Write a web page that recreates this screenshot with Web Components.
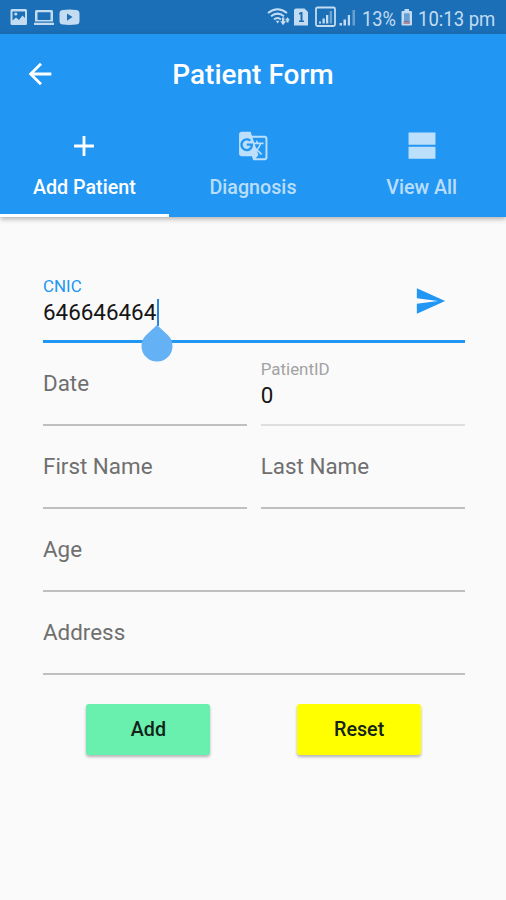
<!DOCTYPE html>
<html lang="en">
<head>
<meta charset="utf-8">
<title>Patient Form</title>
<style>
html,body{margin:0;height:100%}
body{background:#fafafa;font-family:Roboto,"Liberation Sans",sans-serif;overflow:hidden}
</style>
</head>
<body>
<patient-app></patient-app>
<script>
const define = (name, html) => customElements.define(name, class extends HTMLElement {
  connectedCallback() {
    if (this.shadowRoot) return;
    const t = document.createElement('template');
    t.innerHTML = typeof html === 'function' ? html(this) : html;
    this.attachShadow({mode: 'open'}).append(t.content.cloneNode(true));
  }
});

define('status-bar', `
<style>
:host{display:flex;align-items:center;justify-content:space-between;height:34px;background:#1b6fb7;color:#c3dcf1;box-sizing:border-box;padding:0 5px 0 10px}
svg{display:block;fill:currentColor;overflow:visible}
.t{font-size:21px;fill:currentColor}
</style>
<svg width="72" height="34" viewBox="0 0 72 34">
  <path fill-rule="evenodd" d="M2 9H15.500Q17 9 17 10.500V23.500Q17 25 15.500 25H2Q.5 25 .5 23.500V10.500Q.5 9 2 9ZM2.500 11.500V20.500L6 17.500L9 20L12.500 15.500L15 18V11.500Z"/>
  <circle cx="5.800" cy="14" r="1.600"/>
  <path fill-rule="evenodd" d="M26.500 10H41.500Q43 10 43 11.500V21.500H25V11.500Q25 10 26.500 10ZM27.500 12.200V20H40.500V12.200Z"/>
  <rect x="24" y="22.700" width="20" height="2.300"/>
  <path fill-rule="evenodd" d="M53 10Q59.500 9 66 10Q69.500 10 69.500 13.500V21Q69.500 24.500 66 24.500Q59.500 25.300 53 24.500Q49.500 24.500 49.500 21V13.500Q49.500 10 53 10ZM57 13.500V20.700L62.500 17.100Z"/>
</svg>
<svg width="235" height="34" viewBox="266 0 235 34">
  <g fill="none" stroke="currentColor" stroke-width="2">
    <path d="M268 13Q277.500 5.500 287 13"/><path d="M271 16.300Q277.500 11 284 16.300"/><path d="M274 19.500Q277.500 16.500 281 19.500"/>
  </g>
  <path d="M275.800 20.800H279.500L277.600 23.500ZM282 17.500H284.300V21.300H286L283.100 25.200L280.200 21.300H282ZM287.500 17.300L290 20.200H288.600V22.500H286.400V20.200H285Z"/>
  <path fill-rule="evenodd" d="M296 8.500H304.500L308 12V25.500H294V10.500Q294 8.500 296 8.500ZM299 13V14.700L300.500 14V20.500H299V22H304V20.500H302.500V12H301Z"/>
  <path fill="none" stroke="currentColor" stroke-width="1.800" d="M317.500 7.500H333.500Q335 7.500 335 9V24.500Q335 26 333.500 26H317.500Q316 26 316 24.500V9Q316 7.500 317.500 7.500Z"/>
  <path d="M319 21.500H321V23.500H319ZM322.500 18.500H324.800V23.500H322.500ZM326 15H328.300V23.500H326Z"/><path opacity=".5" d="M329.700 11H332V23.500H329.700Z"/>
  <path d="M339.500 23H342V25.500H339.500ZM343.500 19.500H346V25.500H343.500Z"/><path d="M347.800 15H350V25.500H347.800Z"/><path opacity=".45" d="M352.500 10H355V25.500H352.500Z"/>
  <text class="t" transform="translate(362 25.500) scale(.87 1)">13%</text>
  <path fill-rule="evenodd" d="M404.500 9H409V11H411Q412 11 412 12V24.500Q412 25.500 411 25.500H402.500Q401.500 25.500 401.500 24.500V12Q401.500 11 402.500 11H404.500ZM404 13.500V23H409.500V13.500Z"/>
  <path opacity=".45" d="M404 13.500H409.500V21H404Z"/><path fill="#b08a9b" d="M403.500 21.500H410V24H403.500Z"/>
  <text class="t" transform="translate(418 25.500) scale(.882 1)">10:13 pm</text>
</svg>`);

define('app-header', `
<style>
:host{display:flex;flex-direction:column;height:183px;background:#2196f3;color:#fff;box-shadow:0 2px 5px rgba(0,0,0,.3)}
.bar{display:grid;grid-template-columns:80px 1fr 80px;align-items:center;height:79px;padding-top:2px;box-sizing:border-box}
h1{margin:0;text-align:center;font-size:28px;font-weight:500;line-height:34px}
svg{display:block;margin:-1px 0 0 23px;fill:currentColor}
</style>
<div class="bar">
<svg width="34" height="34" viewBox="0 0 24 24"><path d="M20 11H7.830l5.590-5.590L12 4l-8 8 8 8 1.410-1.410L7.830 13H20v-2z"/></svg>
<h1><slot name="title"></slot></h1></div>
<slot></slot>`);

define('tab-strip', `
<style>:host{display:grid;grid-template-columns:repeat(3,1fr);flex:1}</style><slot></slot>`);

define('tab-item', `
<style>
:host{display:flex;flex-direction:column;align-items:center;box-sizing:border-box;padding-top:15.500px;border-bottom:3px solid transparent;color:rgba(255,255,255,.7);font-size:19.700px;font-weight:500;line-height:24px;white-space:nowrap}
:host([active]){color:#fff;border-color:#fff}
::slotted(svg){display:block;width:34px;height:34px;fill:currentColor;margin-bottom:13.500px}
</style>
<slot name="icon"></slot><span><slot></slot></span>`);

define('text-field', el => `
<style>
:host{display:flex;height:83px;box-sizing:border-box;border-bottom:2px solid #bfbfbf;color:#6f6f6f;font-size:22.400px;line-height:26px;position:relative;min-width:0}
:host([filled]){color:#151515;border-bottom:2px solid #dedede}
:host([focused]){color:#151515;border-bottom:3px solid #2196f3}
.c{flex:1;padding-top:27px}
:host([filled]) .c,:host([focused]) .c{padding-top:16px}
.l{font-size:16.900px;line-height:20px;height:20px;color:#a2a2a2;margin-bottom:3px}
:host([focused]) .l{color:#2196f3}
.v{display:flex;align-items:center;height:26px}
.caret{width:2px;height:27px;margin-left:.6px;background:#2b84dd;position:relative}
.caret svg{position:absolute;left:-16px;top:25px;display:block;fill:#64b1f6}
::slotted(svg){width:34px;height:34px;fill:#2196f3;margin:24px 17px 0 0}
</style>
<div class="c">${el.hasAttribute('label') ? `<div class="l">${el.getAttribute('label')}</div>` : ''}
<div class="v"><span><slot></slot></span>${el.hasAttribute('focused') ? `<span class="caret"><svg width="32" height="38" viewBox="0 0 32 38"><path d="M16 1L27 11.200A15.500 15.500 0 1 1 5 11.200Z"/></svg></span>` : ''}</div></div>
<slot name="action"></slot>`);

define('raised-button', `
<style>
:host{display:flex;align-items:center;justify-content:center;width:124px;height:51px;border-radius:3px;background:var(--fill);color:#14221a;font-size:19.700px;font-weight:500;line-height:24px;box-shadow:0 2px 3px rgba(0,0,0,.28)}
</style><slot></slot>`);

define('patient-form', `
<style>
:host{display:grid;grid-template-columns:1fr 1fr;column-gap:14px;padding:43px 41.500px 0 43px}
::slotted([wide]){grid-column:1/-1}
</style><slot></slot>`);

define('button-row', `
<style>:host{display:grid;grid-template-columns:1fr 1fr;justify-items:center;padding-top:29px}</style><slot></slot>`);

define('patient-app', `
<style>:host{display:flex;flex-direction:column;height:100vh}</style>
<status-bar></status-bar>
<app-header><span slot="title">Patient Form</span>
<tab-strip>
<tab-item active><svg slot="icon" viewBox="0 0 24 24"><path d="M19 13h-6v6h-2v-6H5v-2h6V5h2v6h6v2z"/></svg>Add Patient</tab-item>
<tab-item><svg slot="icon" viewBox="0 0 24 24"><path d="M21 4H11l-1-3H3c-1.100 0-2 .9-2 2v15c0 1.100.9 2 2 2h8l1 3h9c1.100 0 2-.9 2-2V6c0-1.100-.9-2-2-2zM7 16c-2.760 0-5-2.240-5-5s2.240-5 5-5c1.350 0 2.480.5 3.350 1.300L9.030 8.570c-.38-.36-1.040-.78-2.030-.78-1.740 0-3.150 1.440-3.150 3.210S5.260 14.210 7 14.210c2.010 0 2.840-1.440 2.920-2.410H7v-1.710h4.680c.07.31.12.61.12 1.020C11.800 13.970 9.890 16 7 16zm6.170-5.420h3.700c-.43 1.250-1.110 2.430-2.050 3.470-.31-.35-.6-.72-.86-1.100l-.79-2.370zm8.330 9.920c0 .55-.45 1-1 1H14l2-2.500-1.040-3.100 3.100 3.100.92-.92-3.300-3.250.02-.02c1.130-1.250 1.930-2.690 2.400-4.220H20v-1.300h-4.530V8h-1.290v1.290h-1.440L11.460 5.500h9.040c.55 0 1 .45 1 1v14z" transform="translate(1.250 1.100) scale(.91)"/></svg>Diagnosis</tab-item>
<tab-item><svg slot="icon" viewBox="0 0 24 24"><path d="M2.500 12.500H21.500V21H2.500ZM2.500 2.500H21.500V11.200H2.500Z"/></svg>View All</tab-item>
</tab-strip></app-header>
<patient-form>
<text-field wide focused label="CNIC">646646464<svg slot="action" viewBox="0 0 24 24"><path d="M2.010 21L22 12 2.010 3 2 10l15 2-15 2z"/></svg></text-field>
<text-field>Date</text-field><text-field filled label="PatientID">0</text-field>
<text-field>First Name</text-field><text-field>Last Name</text-field>
<text-field wide>Age</text-field><text-field wide>Address</text-field>
<button-row wide><raised-button style="--fill:#69f0ae">Add</raised-button><raised-button style="--fill:#ffff00">Reset</raised-button></button-row>
</patient-form>`);
</script>
</body>
</html>
